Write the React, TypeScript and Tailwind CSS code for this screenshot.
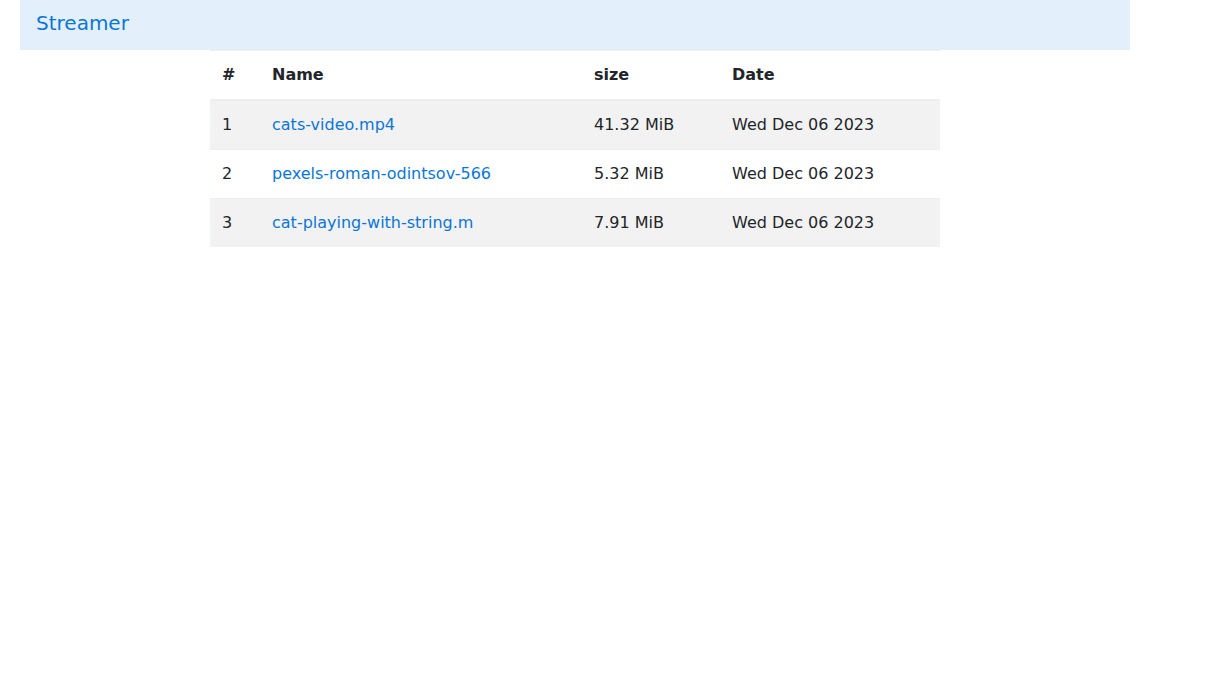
const FILES = [
  { id: 1, name: 'cats-video.mp4', size: '41.32 MiB', date: 'Wed Dec 06 2023' },
  { id: 2, name: 'pexels-roman-odintsov-566', size: '5.32 MiB', date: 'Wed Dec 06 2023' },
  { id: 3, name: 'cat-playing-with-string.m', size: '7.91 MiB', date: 'Wed Dec 06 2023' },
]

export default function App() {
  return (
    <div className="min-h-[690px] bg-white font-['DejaVu_Sans',sans-serif] text-[#212529]">
      <header className="mx-5 flex h-[50px] w-[1110px] items-center bg-[#e3f0fc] px-4 pb-1">
        <h1 className="text-[20px] font-normal text-[#0b76d6]">Streamer</h1>
      </header>

      <table className="ml-[210px] w-[730px] border-collapse text-[16px] leading-6">
        <thead>
          <tr className="border-t border-b-2 border-[#eeeeee]">
            <th className="w-[50px] p-3 text-left font-bold">#</th>
            <th className="w-[322px] p-3 text-left font-bold">Name</th>
            <th className="w-[138px] p-3 text-left font-bold">size</th>
            <th className="p-3 text-left font-bold">Date</th>
          </tr>
        </thead>
        <tbody>
          {FILES.map((f) => (
            <tr
              key={f.id}
              className={`border-[#eeeeee] not-last:border-b ${f.id % 2 === 1 ? 'bg-[#f2f2f2]' : 'bg-white'}`}
            >
              <td className="p-3">{f.id}</td>
              <td className="p-3">
                <a href="#" className="text-[#0b76d6]">
                  {f.name}
                </a>
              </td>
              <td className="p-3">{f.size}</td>
              <td className="p-3">{f.date}</td>
            </tr>
          ))}
        </tbody>
      </table>
    </div>
  )
}
